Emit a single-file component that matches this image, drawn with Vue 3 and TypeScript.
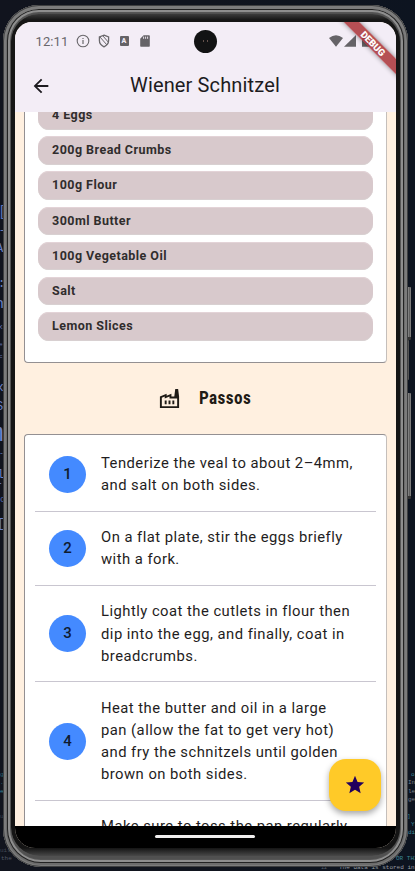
<script setup lang="ts">
interface Fragment {
  text: string
  x: number
  y: number
  size: number
  color: string
}

interface Step {
  text: string[]
}

const ingredients: string[] = [
  '4 Eggs',
  '200g Bread Crumbs',
  '100g Flour',
  '300ml Butter',
  '100g Vegetable Oil',
  'Salt',
  'Lemon Slices',
]

const steps: Step[] = [
  { text: ['Tenderize the veal to about 2–4mm,', 'and salt on both sides.'] },
  { text: ['On a flat plate, stir the eggs briefly', 'with a fork.'] },
  { text: ['Lightly coat the cutlets in flour then', 'dip into the egg, and finally, coat in', 'breadcrumbs.'] },
  { text: ['Heat the butter and oil in a large', 'pan (allow the fat to get very hot)', 'and fry the schnitzels until golden', 'brown on both sides.'] },
  { text: ['Make sure to toss the pan regularly'] },
]

const fragments: Fragment[] = [
  { text: '[', x: -2, y: 212, size: 15, color: '#5a70b6' },
  { text: '-', x: -1, y: 231, size: 10, color: '#6b82c9' },
  { text: 'A', x: -4, y: 249, size: 12, color: '#6b82c9' },
  { text: ':', x: -2, y: 284, size: 12, color: '#6b82c9' },
  { text: 'h', x: -5, y: 304, size: 15, color: '#6b82c9' },
  { text: 'x', x: -2, y: 327, size: 8, color: '#5a70b6' },
  { text: 'e', x: -1, y: 345, size: 6, color: '#5a70b6' },
  { text: 'c', x: -1, y: 357, size: 6, color: '#5a70b6' },
  { text: 'x', x: -4, y: 387, size: 13, color: '#6b82c9' },
  { text: 'S', x: -4, y: 407, size: 12, color: '#6b82c9' },
  { text: 'm', x: -12, y: 434, size: 26, color: '#6b82c9' },
  { text: '-', x: -1, y: 453, size: 8, color: '#6b82c9' },
  { text: 'l', x: -3, y: 475, size: 12, color: '#6b82c9' },
  { text: 'r', x: -4, y: 487, size: 10, color: '#6b82c9' },
  { text: 'o', x: 0, y: 500, size: 9, color: '#5a70b6' },
  { text: '[', x: -3, y: 523, size: 13, color: '#6b82c9' },
  { text: 'g', x: 0, y: 775, size: 6, color: '#2e6876' },
  { text: '.s', x: 0, y: 783, size: 6, color: '#2e6876' },
  { text: 'e', x: 0, y: 792, size: 6, color: '#3b8696' },
  { text: 'ui', x: 0, y: 817, size: 6, color: '#414955' },
  { text: 'uit', x: 0, y: 851, size: 6, color: '#414955' },
  { text: 'the', x: 1, y: 859, size: 6, color: '#515966' },
  { text: 'o', x: 411, y: 775, size: 6, color: '#3b8696' },
  { text: 'In', x: 408, y: 783, size: 6, color: '#7b828c' },
  { text: 'le', x: 408, y: 792, size: 6, color: '#7b828c' },
  { text: 'ge', x: 408, y: 800, size: 6, color: '#7b828c' },
  { text: ']', x: 407, y: 817, size: 6, color: '#3b8696' },
  { text: 'Y', x: 411, y: 825, size: 6, color: '#3b8696' },
  { text: 'di', x: 408, y: 833, size: 6, color: '#3b8696' },
  { text: 'OR THI', x: 396, y: 859, size: 6, color: '#3b8696' },
  { text: '12', x: 321, y: 868, size: 5, color: '#59606b' },
  { text: 'The data is stored in', x: 339, y: 868, size: 6, color: '#989ca3' },
]
</script>

<template>
  <div class="desktop">
    <span
      v-for="(f, i) in fragments"
      :key="i"
      class="fragment"
      :style="{ left: f.x + 'px', top: f.y + 'px', fontSize: f.size + 'px', color: f.color }"
    >{{ f.text }}</span>
    <i class="side-button power"></i>
    <i class="side-button link"></i>
    <i class="side-button volume"></i>

    <div class="phone">
      <div class="bezel">
        <div class="screen">
          <header class="app-header">
            <div class="status">
              <span class="clock">12:11</span>
              <svg class="info" viewBox="0 0 14 14">
                <circle cx="7" cy="7" r="5.8" fill="none" stroke="#6a686c" stroke-width="1.1" />
                <path d="M6.4 6h1.2v4H6.4zM6.4 3.9h1.2v1.2H6.4z" fill="#6a686c" />
              </svg>
              <svg class="shield" viewBox="0 0 12 14">
                <path d="M6 1.2 10.6 3v3.6c0 2.8-1.9 5-4.6 6.2-2.7-1.2-4.6-3.4-4.6-6.2V3z" fill="none" stroke="#6a686c" stroke-width="1.3" />
                <path d="M1.8 2.8 8.8 10.8M5 2l5.2 6" fill="none" stroke="#6a686c" stroke-width="1" />
              </svg>
              <span class="a-box">A</span>
              <svg class="sd" viewBox="0 0 10 12">
                <path d="M3.6.3H9q.8 0 .8.8v9.8q0 .8-.8.8H1q-.8 0-.8-.8V3.8z" fill="#656367" />
                <path d="M3.6 1.6v2.2M5.6 1.6v2.2M7.6 1.6v2.2" stroke="#f3edf6" stroke-width=".9" />
              </svg>
              <span class="camera"><i></i><i></i></span>
              <svg class="wifi" viewBox="0 0 14 12"><path d="M0 3Q7-2.4 14 3L7 11.7z" fill="#656367" /></svg>
              <svg class="signal" viewBox="0 0 12 12"><path d="M12 0v11.7H0z" fill="#656367" /></svg>
              <svg class="battery" viewBox="0 0 8 12"><path d="M0 1.4h2.3V0h3.2v1.4h2.3v10.3H0z" fill="#656367" /></svg>
            </div>
            <div class="toolbar">
              <svg class="back" viewBox="0 0 24 24"><path d="M20 11H7.83l5.59-5.59L12 4l-8 8 8 8 1.41-1.41L7.83 13H20v-2z" fill="#1d1b20" /></svg>
              <h1 class="title">Wiener Schnitzel</h1>
            </div>
            <div class="debug">DEBUG</div>
          </header>

          <main class="content">
            <section class="card ingredients">
              <div v-for="item in ingredients" :key="item" class="pill">{{ item }}</div>
            </section>

            <div class="section-title">
              <svg viewBox="0 0 24 24"><path fill-rule="evenodd" d="M22 22H2V10l7-3v2l5-2v3h3l1-8h3l1 8zM12 9.95l-5 2V10l-3 1.32V20h16v-8h-8zM11 18h2v-4h-2zM7 18h2v-4H7zM17 14h-2v4h2z" fill="#1f1b16" /></svg>
              <h2>Passos</h2>
            </div>

            <section class="card steps">
              <div v-for="(step, i) in steps" :key="i" class="step">
                <div class="badge">{{ i + 1 }}</div>
                <p class="step-text">
                  <span v-for="line in step.text" :key="line">{{ line }}</span>
                </p>
              </div>
            </section>
          </main>

          <button class="fab" type="button" aria-label="Favorite">
            <svg viewBox="0 0 24 24"><path d="M12 17.27 18.18 21l-1.64-7.03L22 9.24l-7.19-.61L12 2 9.19 8.63 2 9.24l5.46 4.73L5.82 21z" fill="#21005d" /></svg>
          </button>

          <footer class="nav"><i></i></footer>
        </div>
      </div>
    </div>
  </div>
</template>

<style>
body {
  margin: 0;
  background: #10141e;
}
</style>

<style scoped>
.desktop {
  position: relative;
  box-sizing: border-box;
  width: 415px;
  height: 871px;
  padding: 5px 7px 4px 3px;
  overflow: hidden;
  background: linear-gradient(90deg, #11141e, #10141e 50%, #0d1420);
  font-family: Roboto, "Liberation Sans", sans-serif;
}
.fragment {
  position: absolute;
  line-height: 1;
  transform: translateY(-50%);
  white-space: pre;
  font-family: "Liberation Mono", monospace;
}
.side-button {
  position: absolute;
  left: 406px;
  width: 5px;
  box-sizing: border-box;
  border-radius: 1px;
  border-bottom: 3px solid #343434;
  background: linear-gradient(90deg, #555, #888 45%, #606060 70%, #8b8b8b);
}
.power { top: 287px; height: 53px; }
.link { top: 340px; height: 40px; width: 3px; border: 0; background: #555; }
.volume { top: 393px; height: 106px; }

.phone {
  position: relative;
  box-sizing: border-box;
  height: 862px;
  padding: 9px 8px 11px;
  border-radius: 36px 36px 38px 38px;
  background: #505050;
  box-shadow:
    inset 0 0 0 1px #3e3f40,
    inset 0 1px 0 3px #7c7c7c,
    inset 0 0 0 4px #6c6c6c,
    inset 0 0 0 5px #222,
    inset 0 0 0 7px #8e8e8e,
    inset 0 0 0 8px #555;
}
.bezel {
  box-sizing: border-box;
  height: 842px;
  padding: 8px 8px 8px 4px;
  margin-right: -4px;
  border-radius: 27px 31px 32px 29px;
  background: linear-gradient(#3c3c3c, #161616 6px, #141414 834px, #484848);
  clip-path: inset(0 4px 0 0 round 28px);
}
.screen {
  position: relative;
  display: flex;
  flex-direction: column;
  width: 381px;
  height: 826px;
  overflow: hidden;
  border-radius: 17px 17px 20px 20px;
  background: #fff0e0;
}

.app-header {
  position: relative;
  flex: none;
  height: 89.5px;
  background: #f3edf6;
}
.status {
  display: flex;
  align-items: center;
  height: 38px;
  padding-left: 20.5px;
}
.status svg { display: block; flex: none; }
.clock {
  width: 40.5px;
  font-size: 13px;
  letter-spacing: 0.1px;
  color: #69676b;
}
.info { width: 14px; height: 14px; }
.shield { width: 12px; height: 14px; margin-left: 7.5px; }
.a-box {
  width: 9px;
  height: 10px;
  margin-left: 10px;
  border-radius: 1px;
  background: #656367;
  color: #f3edf6;
  font-size: 7px;
  font-weight: 900;
  line-height: 10px;
  text-align: center;
}
.sd { width: 10px; height: 12px; margin-left: 11px; }
.camera {
  display: flex;
  align-items: center;
  justify-content: center;
  gap: 3px;
  width: 23px;
  height: 23px;
  margin-left: 44px;
  border-radius: 50%;
  background: #121314;
}
.camera i { width: 1px; height: 2px; background: #65524c; }
.wifi { width: 14px; height: 12px; margin-left: 112px; }
.signal { width: 12px; height: 12px; margin-left: 1.5px; }
.battery { width: 8px; height: 12px; margin-left: 6px; }

.toolbar {
  display: flex;
  align-items: center;
  height: 51px;
  padding-left: 14.5px;
}
.back { width: 22px; height: 22px; }
.title {
  margin: -1px 0 0 78.5px;
  font-size: 20px;
  font-weight: 400;
  letter-spacing: 0.14px;
  line-height: 28px;
  color: #1d1b20;
  white-space: nowrap;
}
.debug {
  position: absolute;
  top: 16.3px;
  right: -36.5px;
  width: 120px;
  height: 11.3px;
  transform: rotate(45deg);
  background: rgba(172, 57, 61, 0.88);
  box-shadow: 0 0 5px rgba(0, 0, 0, 0.45);
  color: #fff;
  font-size: 9.5px;
  font-weight: 900;
  line-height: 11.5px;
  text-align: center;
}

.content {
  flex: none;
  box-sizing: border-box;
  height: 714px;
  padding: 0 9.5px 0 9px;
  overflow: hidden;
}
.card {
  box-sizing: border-box;
  border: 1px solid #949092;
  border-right: 1.6px solid #c5bfbb;
  border-radius: 4px;
  background: #fff;
}
.ingredients {
  display: flex;
  flex-direction: column;
  gap: 6.7px;
  height: 281px;
  margin-top: -30px;
  padding: 18.5px 12.5px 0 13px;
}
.pill {
  box-sizing: border-box;
  flex: none;
  height: 28.5px;
  padding-left: 14px;
  border-radius: 11px;
  background: #d8c9cc;
  box-shadow: inset 0 1px #e3d3d7, inset 0 -0.7px #d8d2d2;
  font-size: 12.5px;
  font-weight: 700;
  letter-spacing: 0.46px;
  line-height: 28.6px;
  color: #302d2d;
}
.section-title {
  display: flex;
  align-items: center;
  gap: 18px;
  height: 71px;
  padding-left: 134px;
}
.section-title svg { width: 23px; height: 23px; }
.section-title h2 {
  margin: 0;
  font-family: "Roboto Condensed", Roboto, sans-serif;
  font-size: 17.5px;
  font-weight: 700;
  color: #1f1b16;
  letter-spacing: 0.4px;
  transform: scaleX(0.985);
  transform-origin: left;
}
.steps { padding: 3.2px 9.5px 0; }
.step {
  display: flex;
  align-items: center;
  box-sizing: border-box;
  padding: 14.5px 0 14.2px 14.5px;
  border-bottom: 1px solid #c9c6d0;
}
.step:last-child { min-height: 96px; align-items: stretch; }
.step:last-child .badge { margin-top: 30px; }
.badge {
  flex: none;
  width: 37px;
  height: 37px;
  border-radius: 50%;
  background: #448aff;
  color: #0f1b30;
  font-size: 15px;
  font-weight: 500;
  line-height: 37px;
  text-align: center;
}
.step-text {
  margin: 0 0 0 15px;
  font-size: 14.8px;
  letter-spacing: 0.47px;
  line-height: 22.2px;
  color: #1f1d22;
}
.step-text span { display: block; white-space: nowrap; }

.fab {
  position: absolute;
  left: 314px;
  top: 737px;
  display: flex;
  align-items: center;
  justify-content: center;
  width: 52px;
  height: 52px;
  padding: 0;
  border: 0;
  border-radius: 17px;
  background: #ffca28;
  box-shadow: 0 3px 6px rgba(0, 0, 0, 0.35);
}
.fab svg { width: 22px; height: 22px; }
.nav {
  display: flex;
  flex: 1;
  justify-content: center;
  background: #000;
}
.nav i {
  width: 100px;
  height: 3.4px;
  margin: 9.5px 1.5px 0 0;
  border-radius: 2px;
  background: #f1efef;
}
</style>
